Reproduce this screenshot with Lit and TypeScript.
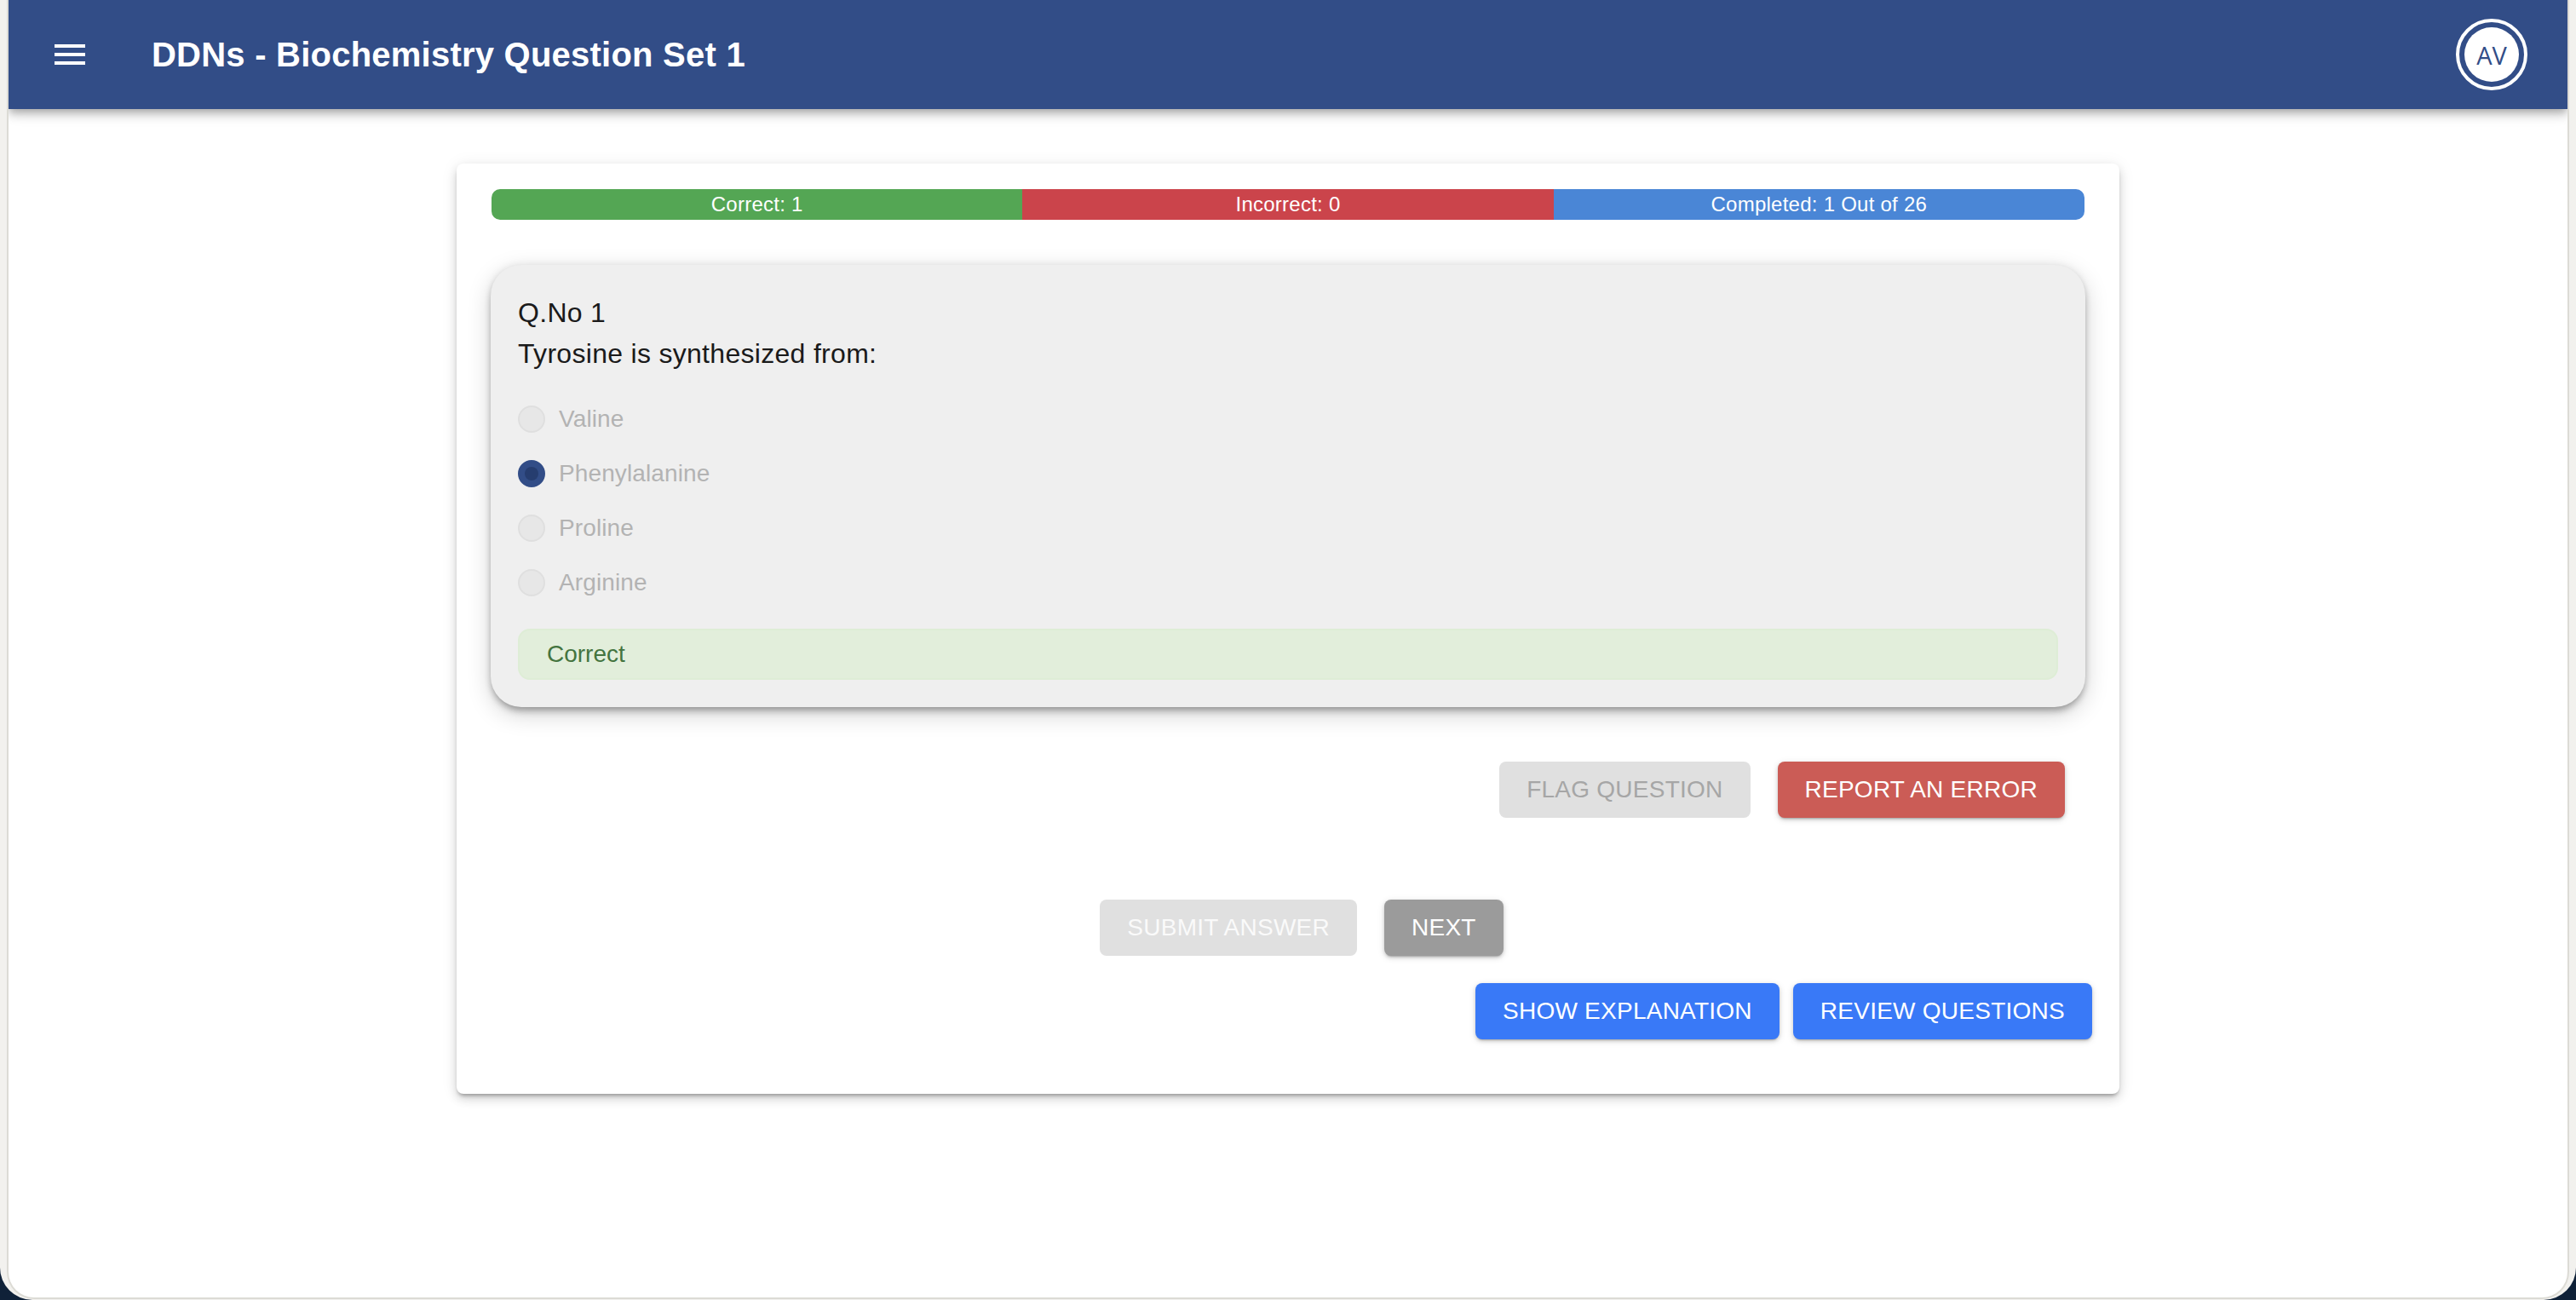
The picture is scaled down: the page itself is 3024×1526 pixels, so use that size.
import { LitElement, html, css } from "lit";
import { customElement } from "lit/decorators.js";

const OPTIONS = [
  { label: "Valine", checked: false },
  { label: "Phenylalanine", checked: true },
  { label: "Proline", checked: false },
  { label: "Arginine", checked: false },
];

@customElement("app-root")
export class AppRoot extends LitElement {
  static styles = css`
    :host {
      display: block;
      height: 1526px;
      overflow: hidden;
      background: #0f2138;
      font-family: "Liberation Sans", Arial, sans-serif;
    }
    .frame {
      height: 1526px;
      box-sizing: border-box;
      padding: 0 8px 0 8px;
      background: #f2f1ee;
      border-radius: 0 0 38px 38px;
    }
    .window {
      height: 1525px;
      box-sizing: border-box;
      background: #fff;
      border: 2px solid #dcdbd5;
      border-top: 0;
      border-radius: 0 0 32px 32px;
      overflow: hidden;
    }
    .appbar {
      height: 128px;
      background: #324d87;
      color: #fff;
      display: flex;
      align-items: center;
      box-shadow: 0 4px 8px -2px rgba(0, 0, 0, 0.2), 0 8px 10px 0 rgba(0, 0, 0, 0.14), 0 2px 20px 0 rgba(0, 0, 0, 0.1);
      position: relative;
      padding: 0 47px 0 48px;
    }
    .menu {
      width: 48px;
      height: 48px;
      fill: #fff;
      display: block;
    }
    .title {
      margin: 0 0 0 72px;
      font-size: 40px;
      font-weight: 700;
      letter-spacing: 0.23px;
      flex: 1;
    }
    .avatar-ring {
      width: 84px;
      height: 84px;
      box-sizing: border-box;
      border: 4px solid #fff;
      border-radius: 50%;
      display: flex;
      align-items: center;
      justify-content: center;
    }
    .avatar {
      width: 64px;
      height: 64px;
      border-radius: 50%;
      background: #fff;
      color: #324d87;
      display: flex;
      align-items: center;
      justify-content: center;
      font-family: "Open Sans", sans-serif;
      font-size: 29px;
      font-weight: 500;
    }
    main {
      padding-top: 64px;
      display: flex;
      justify-content: center;
    }
    .sheet {
      width: 1952px;
      height: 1092px;
      box-sizing: border-box;
      padding: 30px 41px 0 41px;
      background: #fff;
      border-radius: 8px;
      box-shadow: 0 4px 4px -2px rgba(0, 0, 0, 0.3), 0 6px 12px 0 rgba(0, 0, 0, 0.14), 0 2px 20px 0 rgba(0, 0, 0, 0.08);
    }
    .progress {
      display: grid;
      grid-template-columns: repeat(3, 1fr);
      height: 36px;
      border-radius: 10px;
      overflow: hidden;
      color: #fff;
      font-size: 24px;
      letter-spacing: 0.25px;
      line-height: 36px;
      text-align: center;
    }
    .g { background: #54a654; }
    .r { background: #cb444b; }
    .b { background: #4a86d6; }
    .question {
      margin: 53px -1px 0 -1px;
      height: 519px;
      box-sizing: border-box;
      padding: 32px;
      background: #efefef;
      border-radius: 36px;
      box-shadow: 0 6px 8px -2px rgba(0, 0, 0, 0.3), 0 8px 28px 0 rgba(0, 0, 0, 0.18), 0 0 10px 0 rgba(0, 0, 0, 0.08);
      color: #1a1a1a;
      font-size: 32px;
      letter-spacing: 0.3px;
      line-height: 48px;
    }
    .options {
      margin-top: 21px;
      display: flex;
      flex-direction: column;
      letter-spacing: 0.12px;
    }
    .opt {
      height: 64px;
      display: flex;
      align-items: center;
      font-size: 28px;
      color: #b3b3b3;
    }
    .radio {
      width: 32px;
      height: 32px;
      box-sizing: border-box;
      border-radius: 50%;
      background: #e7e7e7;
      border: 2px solid #dfdfdf;
      margin-right: 16px;
      display: flex;
      align-items: center;
      justify-content: center;
    }
    .radio.on {
      background: #324d87;
      border-color: #324d87;
    }
    .radio.on::after {
      content: "";
      width: 16px;
      height: 16px;
      border-radius: 50%;
      background: #263d6f;
    }
    .alert {
      margin-top: 22px;
      height: 60px;
      box-sizing: border-box;
      padding: 0 32px;
      background: #e2eedb;
      border: 2px solid #deedd6;
      border-radius: 14px;
      color: #44743f;
      font-size: 28px;
      letter-spacing: 0;
      line-height: 56px;
    }
    .row { display: flex; }
    .flag-row {
      margin-top: 64px;
      justify-content: flex-end;
      gap: 32px;
      padding-right: 23px;
    }
    .submit-row {
      margin-top: 96px;
      justify-content: center;
      gap: 32px;
      padding-left: 32px;
    }
    .review-row {
      margin-top: 32px;
      margin-right: -9px;
      justify-content: flex-end;
      gap: 16px;
    }
    .btn {
      height: 66px;
      padding: 0 32px;
      border: 0;
      border-radius: 8px;
      font-family: inherit;
      font-size: 28px;
      letter-spacing: 0.25px;
      text-transform: uppercase;
      color: #fff;
      box-shadow: 0 3px 2px -2px rgba(0, 0, 0, 0.2), 0 2px 4px 0 rgba(0, 0, 0, 0.14), 0 2px 8px 0 rgba(0, 0, 0, 0.12);
    }
    .btn.off { background: #e0e0e0; box-shadow: none; }
    .flag { color: #a6a6a6; }
    .submit { color: #fafafa; }
    .report { background: #cb5c56; }
    .next { background: #9b9b9b; }
    .blue { background: #3979f7; }
  `;

  render() {
    return html`
      <div class="frame">
        <div class="window">
          <header class="appbar">
            <svg class="menu" viewBox="0 0 24 24"><path d="M3 18h18v-2H3v2zm0-5h18v-2H3v2zm0-7v2h18V6H3z"></path></svg>
            <h1 class="title">DDNs - Biochemistry Question Set 1</h1>
            <div class="avatar-ring"><div class="avatar">AV</div></div>
          </header>
          <main>
            <section class="sheet">
              <div class="progress">
                <div class="g">Correct: 1</div>
                <div class="r">Incorrect: 0</div>
                <div class="b">Completed: 1 Out of 26</div>
              </div>
              <div class="question">
                <div>Q.No 1</div>
                <div>Tyrosine is synthesized from:</div>
                <div class="options">
                  ${OPTIONS.map(
                    (o) => html`<div class="opt"><span class="radio ${o.checked ? "on" : ""}"></span>${o.label}</div>`
                  )}
                </div>
                <div class="alert">Correct</div>
              </div>
              <div class="row flag-row">
                <button class="btn off flag">Flag Question</button>
                <button class="btn report">Report an Error</button>
              </div>
              <div class="row submit-row">
                <button class="btn off submit">Submit Answer</button>
                <button class="btn next">Next</button>
              </div>
              <div class="row review-row">
                <button class="btn blue">Show Explanation</button>
                <button class="btn blue">Review Questions</button>
              </div>
            </section>
          </main>
        </div>
      </div>
    `;
  }
}
